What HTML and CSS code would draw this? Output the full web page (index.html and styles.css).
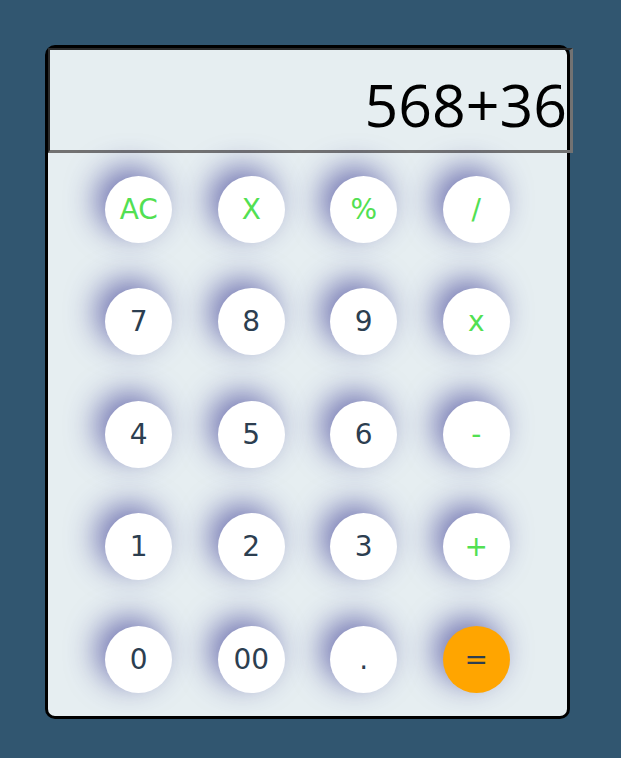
FILE: index.html
```html
<!DOCTYPE html>
<html lang="en">
<head>
<meta charset="utf-8">
<title>Calculator</title>
<link rel="stylesheet" href="styles.css">
</head>
<body>
<div class="calculator">
  <input class="display" type="text" value="568+36" readonly>
  <div class="keypad">
    <button class="key op">AC</button>
    <button class="key op">X</button>
    <button class="key op">%</button>
    <button class="key op">/</button>
    <button class="key">7</button>
    <button class="key">8</button>
    <button class="key">9</button>
    <button class="key op">x</button>
    <button class="key">4</button>
    <button class="key">5</button>
    <button class="key">6</button>
    <button class="key op">-</button>
    <button class="key">1</button>
    <button class="key">2</button>
    <button class="key">3</button>
    <button class="key op">+</button>
    <button class="key">0</button>
    <button class="key">00</button>
    <button class="key">.</button>
    <button class="key equal">=</button>
  </div>
</div>
</body>
</html>
```

FILE: styles.css
```css
html, body {
  margin: 0;
  padding: 0;
}

body {
  background: #315670;
  padding: 45px 0 0 45px;
  min-height: 758px;
  box-sizing: border-box;
  font-family: "DejaVu Sans", Verdana, sans-serif;
}

.calculator {
  width: 519px;
  border: 3px solid #000;
  border-radius: 10px;
  background: #e6eef1;
}

.display {
  display: block;
  box-sizing: border-box;
  width: 525px;
  height: 105px;
  margin: 0;
  padding: 8px 3px 0 2px;
  border-style: solid;
  border-width: 2px 3px 3px 2px;
  border-color: #2a2a2a #727272 #727272 #2a2a2a;
  background: transparent;
  text-align: right;
  font-family: "Open Sans", "Noto Sans", sans-serif;
  font-weight: 400;
  font-size: 59px;
  color: #000;
  outline: none;
}

.keypad {
  display: grid;
  grid-template-columns: repeat(4, 112.5px);
  grid-auto-rows: 112.5px;
  justify-content: center;
  justify-items: center;
  align-items: center;
}

.key {
  width: 67px;
  height: 67px;
  border: none;
  border-radius: 50%;
  background: #fff;
  color: #2c3e50;
  font-family: "DejaVu Sans", Verdana, sans-serif;
  font-size: 28px;
  padding: 0;
  box-shadow: -9px -9px 30px rgba(45, 45, 140, 0.62);
  cursor: pointer;
}

.key.op {
  color: #52e052;
}

.key.equal {
  background: #ffa500;
  color: #2c3e50;
}
```
